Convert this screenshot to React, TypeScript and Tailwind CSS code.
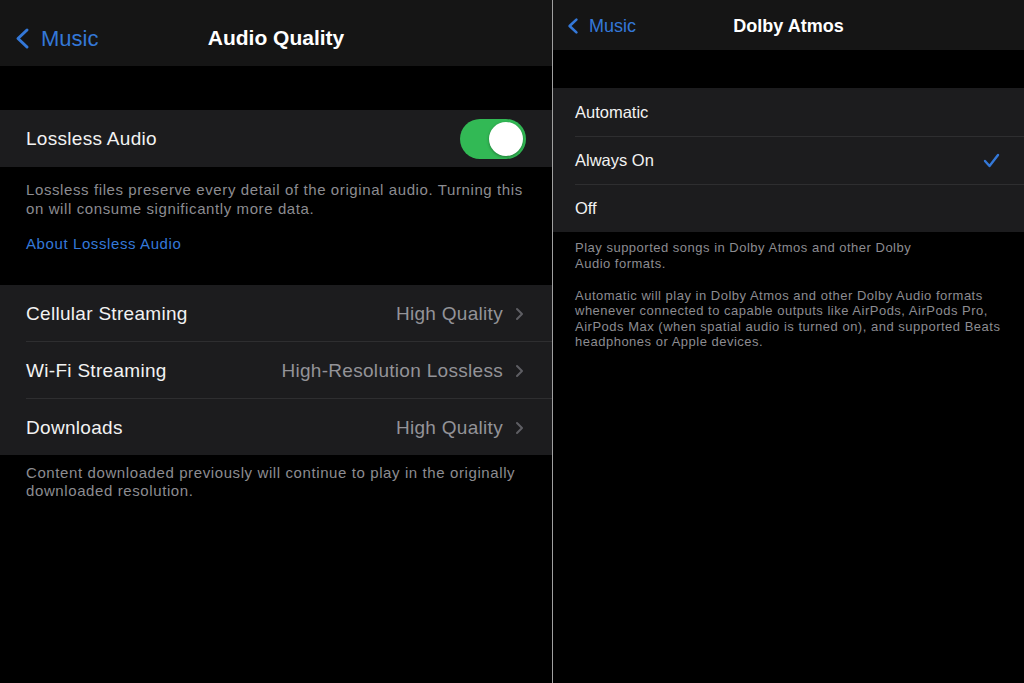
import React from "react";

const font = { fontFamily: '"Liberation Sans", Arial, sans-serif' };

function BackChevron({ w, h, sw }: { w: number; h: number; sw: number }) {
  return (
    <svg width={w} height={h} viewBox={`0 0 ${w} ${h}`} fill="none">
      <polyline
        points={`${w - sw},${sw} ${sw},${h / 2} ${w - sw},${h - sw}`}
        stroke="#3478d8"
        strokeWidth={sw}
        strokeLinecap="round"
        strokeLinejoin="round"
      />
    </svg>
  );
}

function RowChevron() {
  return (
    <svg width="9" height="14" viewBox="0 0 9 14" fill="none">
      <polyline points="2,2 7,7 2,12" stroke="#5e5e63" strokeWidth="2" strokeLinecap="round" strokeLinejoin="round" />
    </svg>
  );
}

function Toggle() {
  return (
    <div className="w-[66px] h-[40px] rounded-full bg-[#32b955] flex items-center justify-end p-[3px]">
      <div className="w-[34px] h-[34px] rounded-full bg-white shadow-[0_1px_3px_rgba(0,0,0,0.35)]" />
    </div>
  );
}

function LeftRow({ label, value }: { label: string; value: string }) {
  return (
    <div className="h-[56px] flex items-center pl-[26px] pr-[28px] pt-[2px] bg-[#1c1c1e] tracking-[0.3px]">
      <span className="text-[19px] text-[#f2f2f2] flex-1">{label}</span>
      <span className="text-[19px] text-[#939398] mr-[12px]">{value}</span>
      <RowChevron />
    </div>
  );
}

function Sep({ ml }: { ml: string }) {
  return (
    <div className="bg-[#1c1c1e]">
      <div className={`h-px bg-[#2e2e30] ${ml}`} />
    </div>
  );
}

export default function App() {
  return (
    <div className="w-[1024px] h-[683px] flex bg-black overflow-hidden" style={font}>
      {/* Left panel */}
      <div className="w-[552px] h-full flex flex-col bg-black">
        <div className="h-[66px] pt-[10px] bg-[#151515] grid grid-cols-[1fr_auto_1fr] items-center">
          <div className="flex items-center pl-[15px] gap-[11px] text-[#3478d8] text-[22px]">
            <BackChevron w={15} h={23} sw={3} />
            <span>Music</span>
          </div>
          <div className="text-white text-[21px] font-bold">Audio Quality</div>
          <div />
        </div>
        <div className="h-[44px]" />
        <div className="h-[57px] bg-[#1c1c1e] flex items-center justify-between pl-[26px] pr-[26px]">
          <span className="text-[19px] tracking-[0.3px] text-[#f2f2f2] pt-[2px]">Lossless Audio</span>
          <Toggle />
        </div>
        <div className="h-[118px] pl-[26px] pt-[13px] text-[15px] tracking-[0.6px] leading-[19px] text-[#8c8c91] whitespace-nowrap">
          <p>
            Lossless files preserve every detail of the original audio. Turning this
            <br />
            on will consume significantly more data.
          </p>
          <p className="mt-[16px] text-[#3478d8]">About Lossless Audio</p>
        </div>
        <LeftRow label="Cellular Streaming" value="High Quality" />
        <Sep ml="ml-[26px]" />
        <LeftRow label="Wi-Fi Streaming" value="High-Resolution Lossless" />
        <Sep ml="ml-[26px]" />
        <LeftRow label="Downloads" value="High Quality" />
        <div className="pl-[26px] pt-[9px] text-[15px] tracking-[0.6px] leading-[18px] text-[#8c8c91] whitespace-nowrap">
          Content downloaded previously will continue to play in the originally
          <br />
          downloaded resolution.
        </div>
      </div>

      {/* Divider */}
      <div className="w-px h-full bg-[#a0a0a0]" />

      {/* Right panel */}
      <div className="flex-1 h-full flex flex-col bg-black">
        <div className="h-[50px] pt-[2px] bg-[#151515] grid grid-cols-[1fr_auto_1fr] items-center">
          <div className="flex items-center pl-[14px] gap-[10px] text-[#3478d8] text-[18px]">
            <BackChevron w={12} h={18} sw={2.6} />
            <span>Music</span>
          </div>
          <div className="text-white text-[18px] font-bold">Dolby Atmos</div>
          <div />
        </div>
        <div className="h-[38px]" />
        <div className="h-[48px] bg-[#1c1c1e] flex items-center pl-[22px] text-[16.5px] text-[#f2f2f2]">Automatic</div>
        <Sep ml="ml-[22px]" />
        <div className="h-[47px] bg-[#1c1c1e] flex items-center pl-[22px] pr-[24px] text-[16.5px] text-[#f2f2f2]">
          <span className="flex-1">Always On</span>
          <svg width="17" height="15" viewBox="0 0 17 15" fill="none">
            <polyline points="2,8 6.5,13 15,2" stroke="#3478d8" strokeWidth="2.4" strokeLinecap="round" strokeLinejoin="round" />
          </svg>
        </div>
        <Sep ml="ml-[22px]" />
        <div className="h-[47px] bg-[#1c1c1e] flex items-center pl-[22px] text-[16.5px] text-[#f2f2f2]">Off</div>
        <div className="pl-[22px] pt-[8px] text-[13px] tracking-[0.5px] leading-[15.5px] text-[#8c8c91] whitespace-nowrap">
          <p>
            Play supported songs in Dolby Atmos and other Dolby
            <br />
            Audio formats.
          </p>
          <p className="mt-[16.5px]">
            Automatic will play in Dolby Atmos and other Dolby Audio formats
            <br />
            whenever connected to capable outputs like AirPods, AirPods Pro,
            <br />
            AirPods Max (when spatial audio is turned on), and supported Beats
            <br />
            headphones or Apple devices.
          </p>
        </div>
      </div>
    </div>
  );
}
